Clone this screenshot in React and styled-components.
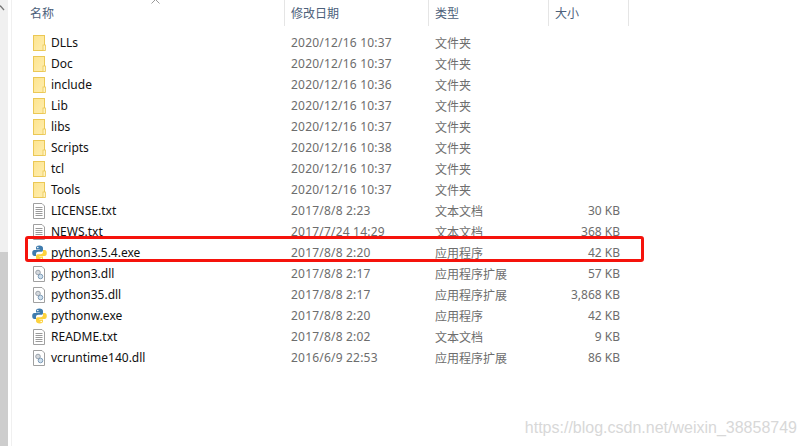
import React from 'react';
import styled, { createGlobalStyle } from 'styled-components';

const folders = [
  ['DLLs', '2020/12/16 10:37'],
  ['Doc', '2020/12/16 10:37'],
  ['include', '2020/12/16 10:36'],
  ['Lib', '2020/12/16 10:37'],
  ['libs', '2020/12/16 10:37'],
  ['Scripts', '2020/12/16 10:38'],
  ['tcl', '2020/12/16 10:37'],
  ['Tools', '2020/12/16 10:37'],
];

const files = [
  ['LICENSE.txt', '2017/8/8 2:23', '文本文档', '30 KB', 'txt'],
  ['NEWS.txt', '2017/7/24 14:29', '文本文档', '368 KB', 'txt'],
  ['python3.5.4.exe', '2017/8/8 2:20', '应用程序', '42 KB', 'py'],
  ['python3.dll', '2017/8/8 2:17', '应用程序扩展', '57 KB', 'dll'],
  ['python35.dll', '2017/8/8 2:17', '应用程序扩展', '3,868 KB', 'dll'],
  ['pythonw.exe', '2017/8/8 2:20', '应用程序', '42 KB', 'py'],
  ['README.txt', '2017/8/8 2:02', '文本文档', '9 KB', 'txt'],
  ['vcruntime140.dll', '2016/6/9 22:53', '应用程序扩展', '86 KB', 'dll'],
];

const FolderIcon = () => (
  <svg width="13" height="16" viewBox="0 0 13 16">
    <defs>
      <linearGradient id="folderFill" x1="0" y1="0" x2="1" y2="1">
        <stop offset="0" stopColor="#fde48f" />
        <stop offset="1" stopColor="#ffeeb0" />
      </linearGradient>
    </defs>
    <rect x="0.5" y="0.5" width="11" height="15" fill="url(#folderFill)" stroke="#ebc855" />
    <rect x="10" y="10" width="2.500" height="5.500" fill="#fff3c4" stroke="#ebc855" strokeWidth="0.8" />
  </svg>
);

const TxtIcon = () => (
  <svg width="13" height="16" viewBox="0 0 13 16">
    <path d="M0.500 0.500H9L11.500 3V15.500H0.500z" fill="#fff" stroke="#a0a0a0" />
    <path d="M2.500 4.500h7M2.500 6.500h7M2.500 8.500h7M2.500 10.500h7M2.500 12.500h7" stroke="#9a9a9a" />
  </svg>
);

const DllIcon = () => (
  <svg width="13" height="16" viewBox="0 0 13 16">
    <path d="M0.500 0.500H9L11.500 3V15.500H0.500z" fill="#fff" stroke="#a0a0a0" />
    <circle cx="5" cy="6.500" r="2.300" fill="#d5d9de" stroke="#9aa2aa" />
    <circle cx="7.500" cy="10.500" r="2.300" fill="#cfe0ee" stroke="#7f9db8" />
  </svg>
);

const PyIcon = () => (
  <PySvg width="15" height="16" viewBox="0 0 15 16">
    <path d="M7.500 0.500C4.500 0.500 4 1.600 4 3v1.500h3.700V5H2.400C1 5 0.200 6.200 0.200 8s.8 3 2.200 3H4V9c0-1.300 1-2.200 2.300-2.200h3C10.400 6.800 11 6 11 5V3c0-1.500-1.500-2.500-3.500-2.500z" fill="#3f7cae" />
    <path d="M7.500 15.500c3 0 3.500-1.100 3.500-2.500v-1.500H7.300V11h5.300c1.400 0 2.200-1.200 2.200-3s-.8-3-2.200-3H11v2c0 1.300-1 2.200-2.300 2.200h-3C4.600 9.200 4 10 4 11v2c0 1.500 1.500 2.500 3.500 2.500z" fill="#fdd23e" />
    <circle cx="5.800" cy="2.500" r="0.800" fill="#fff" />
    <circle cx="9.200" cy="13.500" r="0.800" fill="#fff" />
  </PySvg>
);

const icons = { txt: <TxtIcon />, dll: <DllIcon />, py: <PyIcon /> };

function App() {
  return (
    <Page>
      <GlobalStyle />
      <Rail>
        <svg width="5" height="6" viewBox="0 0 5 6">
          <path d="M0 0.500L4 5" fill="none" stroke="#777" strokeWidth="1.300" />
        </svg>
      </Rail>
      <Pane>
        <SortCaret width="9" height="5" viewBox="0 0 9 5">
          <path d="M0.500 4.500L4.500 0.500L8.500 4.500" fill="none" stroke="#9a9a9a" />
        </SortCaret>
        <Header>
          <HeadCell $first>名称</HeadCell>
          <HeadCell>修改日期</HeadCell>
          <HeadCell>类型</HeadCell>
          <HeadCell>大小</HeadCell>
        </Header>
        <List>
          {folders.map(([name, date]) => (
            <Row key={name}>
              <NameCell><IconSlot><FolderIcon /></IconSlot>{name}</NameCell>
              <DateCell>{date}</DateCell>
              <Cell>文件夹</Cell>
              <SizeCell />
            </Row>
          ))}
          {files.map(([name, date, type, size, icon]) => (
            <Row key={name}>
              <NameCell><IconSlot>{icons[icon]}</IconSlot>{name}</NameCell>
              <DateCell>{date}</DateCell>
              <Cell>{type}</Cell>
              <SizeCell>{size}</SizeCell>
            </Row>
          ))}
        </List>
        <Highlight />
      </Pane>
      <Watermark>https://blog.csdn.net/weixin_38858749</Watermark>
    </Page>
  );
}

const GlobalStyle = createGlobalStyle`
  html, body { margin: 0; padding: 0; background: #fff; }
  body { font-family: "Noto Sans CJK SC", "Liberation Sans", sans-serif; }
`;

const Page = styled.div`
  position: relative;
  display: flex;
  width: 807px;
  height: 446px;
  overflow: hidden;
  background: #fff;
`;

const Rail = styled.div`
  width: 8px;
  padding-top: 5px;
  box-sizing: border-box;
  background: linear-gradient(to bottom, #f0f0f0 0, #f0f0f0 252px, #cdcdcd 252px, #cdcdcd 100%);
  svg { display: block; }
`;

const Pane = styled.div`
  position: relative;
  flex: 1;
  margin-left: 3px;
  padding-left: 10px;
  border-left: 1px solid #f0f0f0;
  margin-right: -1px;
`;

const SortCaret = styled.svg`
  position: absolute;
  left: 139px;
  top: -1px;
`;

const Header = styled.div`
  display: grid;
  grid-template-columns: 263px 144px 120px 80px;
  height: 26px;
  margin-bottom: 6px;
`;

const HeadCell = styled.div`
  padding-left: ${(p) => (p.$first ? '8px' : '6px')};
  font-size: 12px;
  line-height: 25px;
  color: #4c607a;
  border-right: 1px solid #e5e5e5;
`;

const List = styled.div`
  display: flex;
  flex-direction: column;
`;

const Row = styled.div`
  display: grid;
  grid-template-columns: 263px 144px 120px 80px;
  height: 21px;
  align-items: center;
  font-size: 12px;
`;

const NameCell = styled.div`
  display: flex;
  align-items: center;
  padding-left: 11px;
  color: #111;
  font-family: "Noto Sans", "Noto Sans CJK SC", sans-serif;
`;

const IconSlot = styled.span`
  display: flex;
  width: 18px;
  height: 16px;
  flex-shrink: 0;
`;

const PySvg = styled.svg`
  margin-left: -1px;
  flex-shrink: 0;
`;

const Cell = styled.div`
  padding-left: 6px;
  color: #6d6d6d;
  font-family: "Noto Sans", "Noto Sans CJK SC", sans-serif;
`;

const DateCell = styled(Cell)`
  letter-spacing: 0.2px;
`;

const SizeCell = styled(Cell)`
  padding: 0;
  width: 71px;
  text-align: right;
`;

const Highlight = styled.div`
  position: absolute;
  left: 13px;
  top: 236px;
  width: 619px;
  height: 26px;
  box-sizing: border-box;
  border: 3px solid #f5130c;
  border-radius: 3px;
  pointer-events: none;
`;

const Watermark = styled.div`
  position: absolute;
  right: 10px;
  bottom: 9px;
  font-family: "Liberation Sans", sans-serif;
  font-size: 16px;
  color: #d8d8d8;
`;

export default App;
